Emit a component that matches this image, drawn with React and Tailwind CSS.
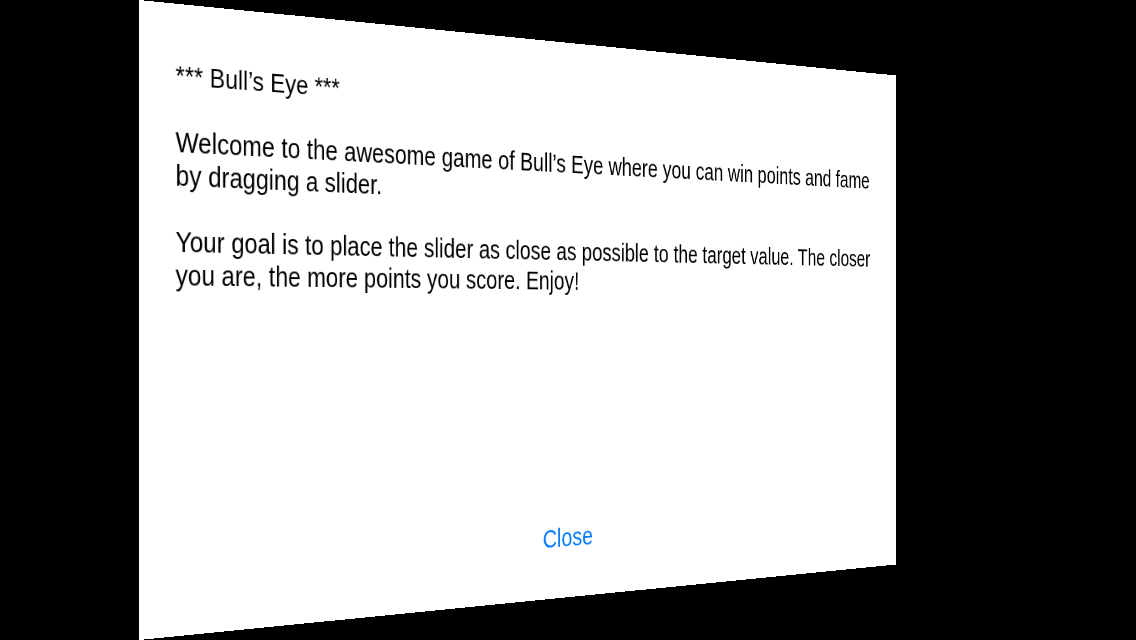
export default function App() {
  return (
    <main className="h-screen w-full overflow-hidden bg-black font-['Liberation_Sans',Arial,sans-serif] [perspective:2418px]">
      <section className="flex h-full w-full flex-col bg-white px-10 pt-10 pb-[35px] text-black [transform:translateZ(-373px)_rotateY(41deg)]">
        <div className="flex-1 px-0.5 pt-4 text-[29px] leading-[34px]">
          <h1 className="text-[28px]">*** Bull’s Eye ***</h1>
          <p className="mt-[33px]">
            Welcome to the awesome game of Bull’s Eye where you can win points and fame by dragging a slider.
          </p>
          <p className="mt-[33px]">
            Your goal is to place the slider as close as possible to the target value. The closer you are, the more
            points you score. Enjoy!
          </p>
        </div>
        <button type="button" className="self-center px-4 py-4 text-[30px] leading-9 text-[#007aff]">
          Close
        </button>
      </section>
    </main>
  );
}
